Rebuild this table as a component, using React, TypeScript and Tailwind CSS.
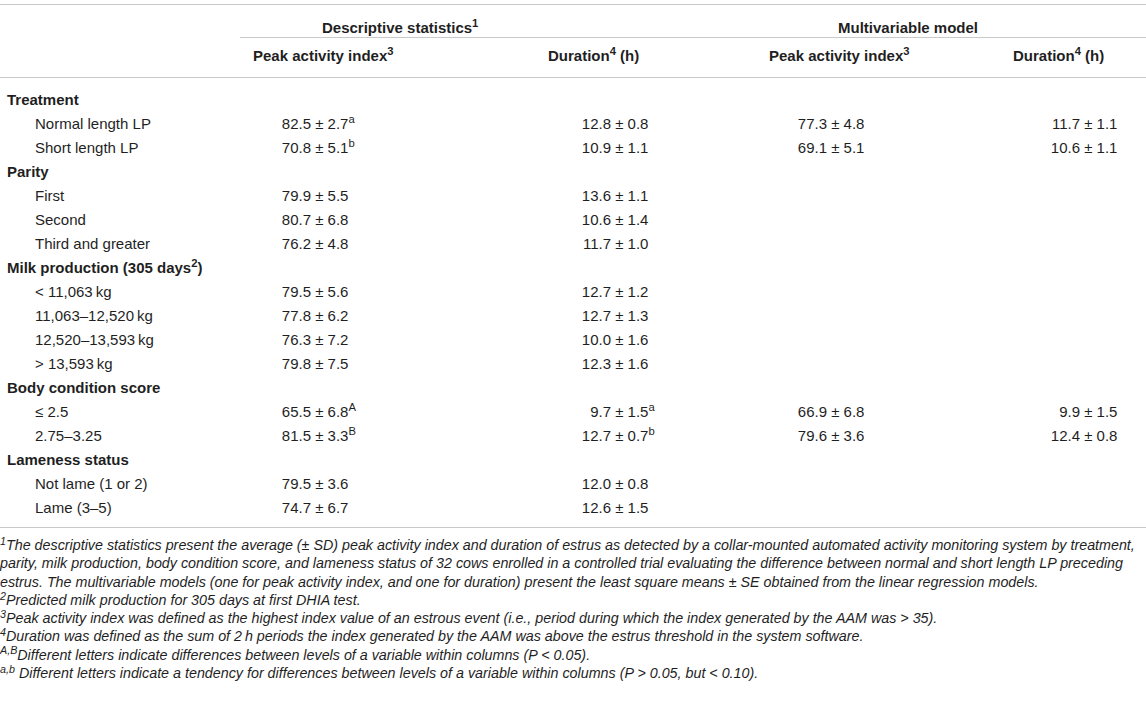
const font = "font-['Liberation_Sans',Arial,Helvetica,sans-serif]";

type Val = { a: string; b: string; sup?: string } | null;

interface Row {
  label: string;
  kind: 'group' | 'item';
  sup?: string;
  suffix?: string;
  vals?: [Val, Val, Val, Val];
}

function v(text: string, sup?: string): Val {
  const [a, b] = text.split(' ± ');
  return { a, b, sup };
}

const rows: Row[] = [
  { label: 'Treatment', kind: 'group' },
  { label: 'Normal length LP', kind: 'item', vals: [v('82.5 ± 2.7', 'a'), v('12.8 ± 0.8'), v('77.3 ± 4.8'), v('11.7 ± 1.1')] },
  { label: 'Short length LP', kind: 'item', vals: [v('70.8 ± 5.1', 'b'), v('10.9 ± 1.1'), v('69.1 ± 5.1'), v('10.6 ± 1.1')] },
  { label: 'Parity', kind: 'group' },
  { label: 'First', kind: 'item', vals: [v('79.9 ± 5.5'), v('13.6 ± 1.1'), null, null] },
  { label: 'Second', kind: 'item', vals: [v('80.7 ± 6.8'), v('10.6 ± 1.4'), null, null] },
  { label: 'Third and greater', kind: 'item', vals: [v('76.2 ± 4.8'), v('11.7 ± 1.0'), null, null] },
  { label: 'Milk production (305 days', kind: 'group', sup: '2', suffix: ')' },
  { label: '< 11,063\u2009kg', kind: 'item', vals: [v('79.5 ± 5.6'), v('12.7 ± 1.2'), null, null] },
  { label: '11,063–12,520\u2009kg', kind: 'item', vals: [v('77.8 ± 6.2'), v('12.7 ± 1.3'), null, null] },
  { label: '12,520–13,593\u2009kg', kind: 'item', vals: [v('76.3 ± 7.2'), v('10.0 ± 1.6'), null, null] },
  { label: '> 13,593\u2009kg', kind: 'item', vals: [v('79.8 ± 7.5'), v('12.3 ± 1.6'), null, null] },
  { label: 'Body condition score', kind: 'group' },
  { label: '≤ 2.5', kind: 'item', vals: [v('65.5 ± 6.8', 'A'), v('9.7 ± 1.5', 'a'), v('66.9 ± 6.8'), v('9.9 ± 1.5')] },
  { label: '2.75–3.25', kind: 'item', vals: [v('81.5 ± 3.3', 'B'), v('12.7 ± 0.7', 'b'), v('79.6 ± 3.6'), v('12.4 ± 0.8')] },
  { label: 'Lameness status', kind: 'group' },
  { label: 'Not lame (1 or 2)', kind: 'item', vals: [v('79.5 ± 3.6'), v('12.0 ± 0.8'), null, null] },
  { label: 'Lame (3–5)', kind: 'item', vals: [v('74.7 ± 6.7'), v('12.6 ± 1.5'), null, null] },
];

// width of the part before "±" in each value column (keeps ± aligned)
const leadW = ['w-[71px]', 'w-[71px]', 'w-[67px]', 'w-[80px]'];

function Cell({ val, col }: { val: Val; col: number }) {
  if (!val) return <div />;
  return (
    <div className="whitespace-nowrap">
      <span className={`inline-block text-right ${leadW[col]}`}>{val.a}</span>
      <span> ± {val.b}</span>
      {val.sup && <sup>{val.sup}</sup>}
    </div>
  );
}

function HeadCell({ title, pl }: { title: string; pl: string }) {
  return (
    <div className={`whitespace-nowrap pt-[9px] leading-[18px] font-bold ${pl}`}>
      {title}
      <sup>{title === 'Peak activity index' ? '3' : '4'}</sup>
      {title === 'Duration' && ' (h)'}
    </div>
  );
}

export default function App() {
  return (
    <div className={`min-h-[702px] w-[1146px] bg-white pt-[4px] text-[15px] text-[#1f1f1f] ${font}`}>
      <div className="grid grid-cols-[240px_300px_220px_240px_146px] border-t border-[#c9c9c9]">
        {/* header row 1 */}
        <div className="h-[33px]" />
        <div className="col-span-2 h-[33px] border-b border-[#c9c9c9] pl-[82px] pt-[14px] leading-[18px] font-bold">
          Descriptive statistics<sup>1</sup>
        </div>
        <div className="col-span-2 h-[33px] border-b border-[#c9c9c9] pl-[78px] pt-[14px] leading-[18px] font-bold">
          Multivariable model
        </div>

        {/* header row 2 */}
        <div className="h-[40px] border-b border-[#c9c9c9]" />
        <div className="h-[40px] border-b border-[#c9c9c9]">
          <HeadCell title="Peak activity index" pl="pl-[13px]" />
        </div>
        <div className="h-[40px] border-b border-[#c9c9c9]">
          <HeadCell title="Duration" pl="pl-[8px]" />
        </div>
        <div className="h-[40px] border-b border-[#c9c9c9]">
          <HeadCell title="Peak activity index" pl="pl-[9px]" />
        </div>
        <div className="h-[40px] border-b border-[#c9c9c9]">
          <HeadCell title="Duration" pl="pl-[13px]" />
        </div>

        <div className="col-span-5 h-[10px]" />

        {rows.map((r, i) =>
          r.kind === 'group' ? (
            <div key={i} className="col-span-5 h-[24px] pl-[7px] leading-[24px] font-bold">
              {r.label}
              {r.sup && <sup>{r.sup}</sup>}
              {r.suffix}
            </div>
          ) : (
            <div key={i} className="col-span-5 grid h-[24px] grid-cols-subgrid leading-[24px]">
              <div className="pl-[35px] whitespace-nowrap">{r.label}</div>
              {r.vals!.map((val, c) => (
                <Cell key={c} val={val} col={c} />
              ))}
            </div>
          )
        )}

        <div className="col-span-5 h-[8px] border-b border-[#c9c9c9]" />
      </div>

      <div className="pt-[8px] text-[14.3px] italic leading-[18.3px]">
        <p>
          <sup>1</sup>The descriptive statistics present the average (± SD) peak activity index and duration of estrus as detected by a collar-mounted automated activity monitoring system by treatment, parity, milk production, body condition score, and lameness status of 32 cows enrolled in a controlled trial evaluating the difference between normal and short length LP preceding estrus. The multivariable models (one for peak activity index, and one for duration) present the least square means ± SE obtained from the linear regression models.
        </p>
        <p>
          <sup>2</sup>Predicted milk production for 305 days at first DHIA test.
        </p>
        <p>
          <sup>3</sup>Peak activity index was defined as the highest index value of an estrous event (i.e., period during which the index generated by the AAM was &gt; 35).
        </p>
        <p>
          <sup>4</sup>Duration was defined as the sum of 2{'\u2009'}h periods the index generated by the AAM was above the estrus threshold in the system software.
        </p>
        <p>
          <sup>A,B</sup>Different letters indicate differences between levels of a variable within columns (P &lt; 0.05).
        </p>
        <p>
          <sup>a,b</sup> Different letters indicate a tendency for differences between levels of a variable within columns (P &gt; 0.05, but &lt; 0.10).
        </p>
      </div>
    </div>
  );
}
